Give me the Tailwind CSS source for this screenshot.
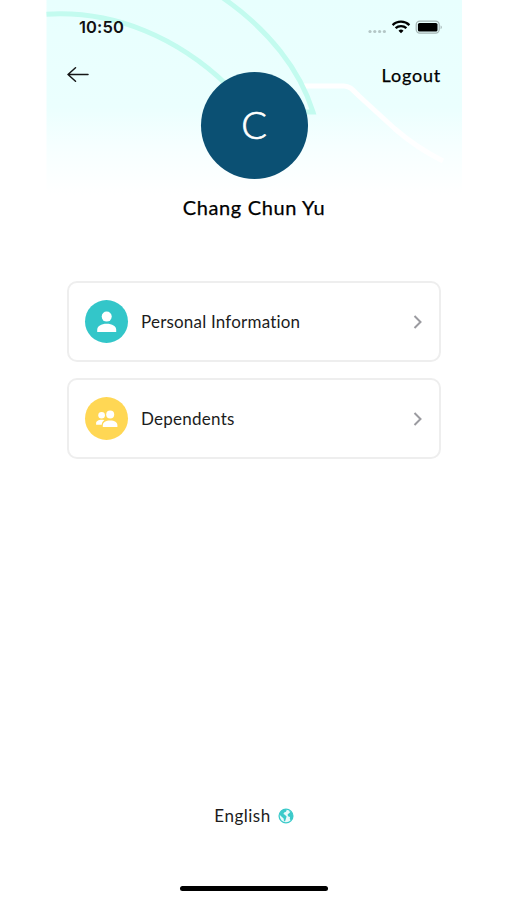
<!DOCTYPE html>
<html lang="en">
<head>
    <meta charset="UTF-8">
    <meta name="viewport" content="width=device-width, initial-scale=1.0">
    <title>Profile</title>
    <script src="https://cdn.jsdelivr.net/npm/@tailwindcss/browser@4"></script>
</head>
<body class="bg-white font-['Lato',sans-serif] text-[#1c1c1c]">
    <div class="relative ml-[46px] flex h-[900px] w-[416px] flex-col overflow-hidden">
        <!-- Header background -->
        <svg class="absolute top-0 left-0 -z-10" width="416" height="200" viewBox="0 0 416 200" fill="none">
            <defs>
                <linearGradient id="fade" x1="0" y1="0" x2="0" y2="1">
                    <stop offset="0" stop-color="#e8fffe" />
                    <stop offset="0.55" stop-color="#ebfffe" />
                    <stop offset="0.75" stop-color="#f6ffff" />
                    <stop offset="1" stop-color="#ffffff" />
                </linearGradient>
            </defs>
            <rect x="0.5" width="415.5" height="195" fill="url(#fade)" />
            <path d="M255 86H298C304 86 307 90 313 96L349 129C364 142 381 153 397 161" stroke="#fff" stroke-width="5" />
            <path d="M0.5 14.3C70 10 133 39 181 85" stroke="#c3fbef" stroke-width="5" />
            <path d="M177 -2C223 30 254 70 267 112H250" stroke="#c3fbef" stroke-width="5" />
        </svg>

        <!-- Status bar -->
        <div class="flex h-[54px] items-center justify-between pr-5 pl-[33px]">
            <span class="font-['Inter',sans-serif] text-[16.5px] font-semibold tracking-[0.1px] text-[#111]">10:50</span>
            <svg width="76" height="16" viewBox="0 0 76 16" fill="none">
                <g fill="#b4c6c6">
                    <circle cx="4" cy="12.5" r="1.6" />
                    <circle cx="8.8" cy="12.5" r="1.6" />
                    <circle cx="13.6" cy="12.5" r="1.6" />
                    <circle cx="18.4" cy="12.5" r="1.6" />
                </g>
                <g stroke="#000" stroke-width="2.3">
                    <path d="M26.6 6.1a12 12 0 0 1 16.8 0" />
                    <path d="M29.6 9.2a7.8 7.8 0 0 1 10.8 0" />
                </g>
                <path d="M35 14.2l-2.5-2.5a3.6 3.6 0 0 1 5 0z" fill="#000" />
                <rect x="50.2" y="2.2" width="23" height="12" rx="3.6" stroke="#a5b5b4" stroke-width="1.2" />
                <rect x="51.9" y="3.9" width="19.6" height="8.6" rx="1.6" fill="#000" />
                <path d="M74.6 6.4c1.6.6 1.6 3.2 0 3.8z" fill="#a5b5b4" />
            </svg>
        </div>

        <!-- Navigation -->
        <div class="flex h-[42px] items-center justify-between pr-[21px] pl-[21px]">
            <svg width="22" height="16" viewBox="0 0 22 16" fill="none" stroke="#161616" stroke-width="1.5" stroke-linecap="round" stroke-linejoin="round">
                <path d="M21 7.5H1M8.5 0.8L1 7.5l7.5 6.7" />
            </svg>
            <span class="text-[18px] tracking-[0.8px] text-black [-webkit-text-stroke:0.25px_black]">Logout</span>
        </div>

        <!-- Profile -->
        <div class="-mt-6 flex flex-col items-center">
            <div class="flex size-[107px] items-center justify-center rounded-full bg-[#0b5073] pb-0.5 text-[38px] font-light text-white [-webkit-text-stroke:0.7px_white]">C</div>
            <h1 class="mt-3.5 text-[20px] leading-7 tracking-[0.65px] text-black [-webkit-text-stroke:0.25px_black]">Chang Chun Yu</h1>
        </div>

        <!-- Menu -->
        <div class="mt-[60px] flex flex-col gap-4 pr-[21px] pl-[21px]">
            <a class="flex h-[81px] items-center rounded-[10px] border-2 border-[#eeeeee] bg-white pr-4 pl-4">
                <span class="flex size-[43px] items-center justify-center rounded-full bg-[#33c6c9]">
                    <svg width="20" height="22" viewBox="0 0 20 22" fill="#fff">
                        <circle cx="9.7" cy="5.6" r="5" />
                        <path d="M.2 21v-2.2c0-3.6 4-6 9.5-6s9.5 2.4 9.5 6V21z" />
                    </svg>
                </span>
                <span class="ml-[13px] flex-1 text-[17px] tracking-[0.2px]">Personal Information</span>
                <svg width="10" height="14" viewBox="0 0 10 14" fill="none" stroke="#9b9ba0" stroke-width="2">
                    <path d="M1.5 1l6 6-6 6" />
                </svg>
            </a>
            <a class="flex h-[81px] items-center rounded-[10px] border-2 border-[#eeeeee] bg-white pr-4 pl-4">
                <span class="flex size-[43px] items-center justify-center rounded-full bg-[#ffd754]">
                    <svg width="22" height="18" viewBox="0 0 22 18" fill="#fff">
                        <circle cx="5.6" cy="5.2" r="3.3" />
                        <circle cx="14.2" cy="4.6" r="4" />
                        <path d="M.1 14.8v-1.6c0-2.2 2.4-3.5 5.6-3.5 1 0 2 .1 2.7.5-1.6 1-2.5 2.4-2.7 4.6z" />
                        <path d="M6.8 17v-1.6c0-2.8 3-4.8 7.4-4.8s7.2 2 7.2 4.8V17z" />
                    </svg>
                </span>
                <span class="ml-[13px] flex-1 text-[17px] tracking-[0.25px]">Dependents</span>
                <svg width="10" height="14" viewBox="0 0 10 14" fill="none" stroke="#9b9ba0" stroke-width="2">
                    <path d="M1.5 1l6 6-6 6" />
                </svg>
            </a>
        </div>

        <!-- Language -->
        <div class="mt-auto mb-[58px] flex h-6 items-center justify-center gap-[7px]">
            <span class="text-[17px] tracking-[0.5px]">English</span>
            <svg width="16" height="16" viewBox="0 0 16 16" fill="none">
                <circle cx="8" cy="8" r="6.9" fill="#e9fafa" stroke="#3ccaca" stroke-width="1.3" />
                <path d="M1.2 6.2L3.4 2.6 7 1l1.8.8-.8 2-1.8.8L5.4 6l1.4.8 1.8 1.6-.6 2-1 3L6 13l-.4-2.4L3.4 8.4z" fill="#3ccaca" />
                <path d="M11.2 3l2.2.8 1.6 3.4-.2 3-2 2.2-1-1.4.2-2-2-.8-.4-1.8 1.4-1.2 1-.6z" fill="#3ccaca" />
            </svg>
        </div>

        <!-- Home indicator -->
        <div class="mb-[9px] h-[5px] w-[148px] self-center rounded-full bg-black"></div>
    </div>
</body>
</html>
